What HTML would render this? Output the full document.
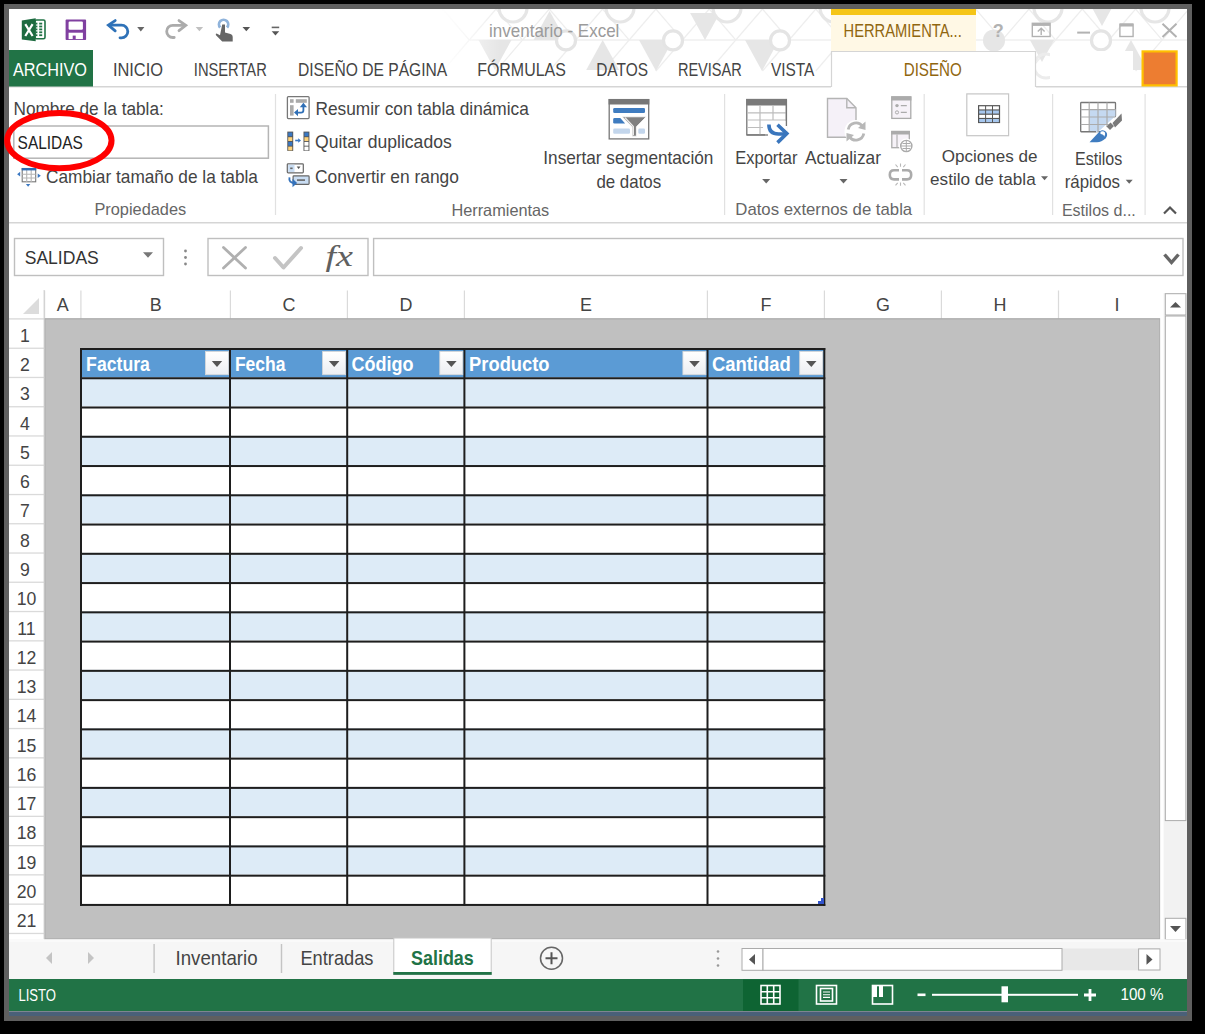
<!DOCTYPE html>
<html><head><meta charset="utf-8"><style>
html,body{margin:0;padding:0;background:#000;overflow:hidden}
svg{display:block}
text{font-family:"Liberation Sans",sans-serif;white-space:pre}
</style></head><body>
<svg width="1205" height="1034" viewBox="0 0 1205 1034">
<rect x="0" y="0" width="1205" height="1034" fill="#000"/>
<rect x="4" y="4" width="1188" height="1017" fill="#5f5f5f"/>
<rect x="9" y="9" width="1178" height="1002" fill="#fff"/>
<g clip-path="url(#titleclip)">
<rect x="470" y="39.3" width="717" height="1.4" fill="#eeeeee"/>
<path d="M389.4,9 L416.0,40 L389.4,71 M416.0,40 L442.7,9" fill="none" stroke="#eeeeee" stroke-width="1.2"/>
<path d="M442.7,9 L469.3,40 L442.7,71 M469.3,40 L496.0,9" fill="none" stroke="#eeeeee" stroke-width="1.2"/>
<path d="M496.0,9 L522.6,40 L496.0,71 M522.6,40 L549.3,9" fill="none" stroke="#eeeeee" stroke-width="1.2"/>
<path d="M549.3,9 L575.9,40 L549.3,71 M575.9,40 L602.6,9" fill="none" stroke="#eeeeee" stroke-width="1.2"/>
<path d="M602.6,9 L629.2,40 L602.6,71 M629.2,40 L655.9,9" fill="none" stroke="#eeeeee" stroke-width="1.2"/>
<path d="M655.9,9 L682.5,40 L655.9,71 M682.5,40 L709.2,9" fill="none" stroke="#eeeeee" stroke-width="1.2"/>
<path d="M709.2,9 L735.8,40 L709.2,71 M735.8,40 L762.5,9" fill="none" stroke="#eeeeee" stroke-width="1.2"/>
<path d="M762.5,9 L789.1,40 L762.5,71 M789.1,40 L815.8,9" fill="none" stroke="#eeeeee" stroke-width="1.2"/>
<path d="M815.8,9 L842.4,40 L815.8,71 M842.4,40 L869.1,9" fill="none" stroke="#eeeeee" stroke-width="1.2"/>
<path d="M869.1,9 L895.7,40 L869.1,71 M895.7,40 L922.4,9" fill="none" stroke="#eeeeee" stroke-width="1.2"/>
<path d="M922.4,9 L949.0,40 L922.4,71 M949.0,40 L975.7,9" fill="none" stroke="#eeeeee" stroke-width="1.2"/>
<path d="M975.7,9 L1002.3,40 L975.7,71 M1002.3,40 L1029.0,9" fill="none" stroke="#eeeeee" stroke-width="1.2"/>
<path d="M1029.0,9 L1055.6,40 L1029.0,71 M1055.6,40 L1082.3,9" fill="none" stroke="#eeeeee" stroke-width="1.2"/>
<path d="M1082.3,9 L1108.9,40 L1082.3,71 M1108.9,40 L1135.6,9" fill="none" stroke="#eeeeee" stroke-width="1.2"/>
<path d="M1135.6,9 L1162.2,40 L1135.6,71 M1162.2,40 L1188.9,9" fill="none" stroke="#eeeeee" stroke-width="1.2"/>
<path d="M1188.9,9 L1215.5,40 L1188.9,71 M1215.5,40 L1242.2,9" fill="none" stroke="#eeeeee" stroke-width="1.2"/>
<path d="M1242.2,9 L1268.8,40 L1242.2,71 M1268.8,40 L1295.5,9" fill="none" stroke="#eeeeee" stroke-width="1.2"/>
<path d="M1295.5,9 L1322.1,40 L1295.5,71 M1322.1,40 L1348.8,9" fill="none" stroke="#eeeeee" stroke-width="1.2"/>
<path d="M1348.8,9 L1375.4,40 L1348.8,71 M1375.4,40 L1402.1,9" fill="none" stroke="#eeeeee" stroke-width="1.2"/>
<path d="M1402.1,9 L1428.7,40 L1402.1,71 M1428.7,40 L1455.4,9" fill="none" stroke="#eeeeee" stroke-width="1.2"/>
<path d="M1455.4,9 L1482.0,40 L1455.4,71 M1482.0,40 L1508.7,9" fill="none" stroke="#eeeeee" stroke-width="1.2"/>
<path d="M1508.7,9 L1535.3,40 L1508.7,71 M1535.3,40 L1562.0,9" fill="none" stroke="#eeeeee" stroke-width="1.2"/>
<path d="M1562.0,9 L1588.6,40 L1562.0,71 M1588.6,40 L1615.3,9" fill="none" stroke="#eeeeee" stroke-width="1.2"/>
<path d="M1615.3,9 L1641.9,40 L1615.3,71 M1641.9,40 L1668.6,9" fill="none" stroke="#eeeeee" stroke-width="1.2"/>
<path d="M1668.6,9 L1695.2,40 L1668.6,71 M1695.2,40 L1721.9,9" fill="none" stroke="#eeeeee" stroke-width="1.2"/>
<path d="M1721.9,9 L1748.5,40 L1721.9,71 M1748.5,40 L1775.2,9" fill="none" stroke="#eeeeee" stroke-width="1.2"/>
<path d="M1775.2,9 L1801.8,40 L1775.2,71 M1801.8,40 L1828.5,9" fill="none" stroke="#eeeeee" stroke-width="1.2"/>
<path d="M1828.5,9 L1855.1,40 L1828.5,71 M1855.1,40 L1881.8,9" fill="none" stroke="#eeeeee" stroke-width="1.2"/>
<path d="M1881.8,9 L1908.4,40 L1881.8,71 M1908.4,40 L1935.1,9" fill="none" stroke="#eeeeee" stroke-width="1.2"/>
<path d="M1935.1,9 L1961.7,40 L1935.1,71 M1961.7,40 L1988.4,9" fill="none" stroke="#eeeeee" stroke-width="1.2"/>
<path d="M1988.4,9 L2015.0,40 L1988.4,71 M2015.0,40 L2041.7,9" fill="none" stroke="#eeeeee" stroke-width="1.2"/>
<path d="M2041.7,9 L2068.3,40 L2041.7,71 M2068.3,40 L2095.0,9" fill="none" stroke="#eeeeee" stroke-width="1.2"/>
<polygon points="549.6,11 565.6,40 533.6,40" fill="#e6e6e6"/>
<polygon points="602.7,40 619.2,70 586.2,70" fill="#e6e6e6"/>
<polygon points="690.1,13 719.9,13 705,40" fill="#e6e6e6"/>
<polygon points="639.0,40 673.0,40 656,71" fill="#e6e6e6"/>
<polygon points="745.0,40 779.0,40 762,71" fill="#e6e6e6"/>
<polygon points="1092.7,9 1111.3,9 1102,26" fill="#e6e6e6"/>
<polygon points="1029.9,40 1054.1,40 1042,62" fill="#e6e6e6"/>
<polygon points="1131,40 1147.5,70 1114.5,70" fill="#e6e6e6"/>
<polygon points="905.1,13 934.9,13 920,40" fill="#e6e6e6"/>
<polygon points="868,40 884.5,70 851.5,70" fill="#e6e6e6"/>
<polygon points="478.5,40 511.5,40 495,70" fill="#e6e6e6"/>
<circle cx="566" cy="40.4" r="9.5" fill="#fff" stroke="#e4e4e4" stroke-width="3.2"/>
<circle cx="673" cy="40.4" r="9.5" fill="#fff" stroke="#e4e4e4" stroke-width="3.2"/>
<circle cx="780" cy="40.4" r="9.5" fill="#fff" stroke="#e4e4e4" stroke-width="3.2"/>
<circle cx="887" cy="40.4" r="9.5" fill="#fff" stroke="#e4e4e4" stroke-width="3.2"/>
<circle cx="994" cy="40.4" r="11" fill="#e6e6e6"/>
<circle cx="1101" cy="40.4" r="9.5" fill="#fff" stroke="#e4e4e4" stroke-width="3.2"/>
<circle cx="513" cy="8" r="14" fill="#fff" stroke="#e6e6e6" stroke-width="3.2"/>
<circle cx="620" cy="8" r="14" fill="#fff" stroke="#e6e6e6" stroke-width="3.2"/>
<circle cx="727" cy="8" r="14" fill="#fff" stroke="#e6e6e6" stroke-width="3.2"/>
<circle cx="834" cy="8" r="14" fill="#fff" stroke="#e6e6e6" stroke-width="3.2"/>
<circle cx="941" cy="8" r="14" fill="#fff" stroke="#e6e6e6" stroke-width="3.2"/>
<circle cx="1048" cy="8" r="14" fill="#fff" stroke="#e6e6e6" stroke-width="3.2"/>
<circle cx="1155" cy="8" r="14" fill="#fff" stroke="#e6e6e6" stroke-width="3.2"/>
<circle cx="1046" cy="66" r="12" fill="none" stroke="#ececec" stroke-width="3"/>
<rect x="440" y="9" width="60" height="77" fill="url(#fadeg)"/>
</g>
<rect x="831" y="9" width="145" height="6" fill="#f5c518"/>
<rect x="831" y="15" width="145" height="36" fill="#fff8e5"/>
<text x="843.50" y="37.30" font-size="18.02" fill="#90660f" textLength="118.29" lengthAdjust="spacingAndGlyphs">HERRAMIENTA...</text>
<text x="489.10" y="37.20" font-size="17.73" fill="#9b9b9b" textLength="130.30" lengthAdjust="spacingAndGlyphs">inventario - Excel</text>
<rect x="9" y="86" width="822" height="1.5" fill="#d5d5d5"/>
<rect x="1036" y="86" width="151" height="1.5" fill="#d5d5d5"/>
<rect x="831" y="51" width="205" height="36" fill="#fff"/>
<path d="M831.5,87 V51.5 H1035.5 V87" fill="none" stroke="#d5d5d5" stroke-width="1.2"/>
<rect x="1050" y="51" width="83" height="35" fill="#fff"/>
<rect x="1141.5" y="50.3" width="36.2" height="36.2" fill="#ffc000"/>
<rect x="1143.7" y="52.5" width="31.8" height="31.8" fill="#ed7d31"/>
<rect x="9" y="50" width="84" height="36.5" fill="#217346"/>
<text x="13.00" y="75.50" font-size="19.19" fill="#fff" textLength="74.00" lengthAdjust="spacingAndGlyphs">ARCHIVO</text>
<text x="112.90" y="75.50" font-size="19.19" fill="#444" textLength="50.09" lengthAdjust="spacingAndGlyphs">INICIO</text>
<text x="193.80" y="75.50" font-size="19.19" fill="#444" textLength="73.00" lengthAdjust="spacingAndGlyphs">INSERTAR</text>
<text x="298.00" y="75.50" font-size="19.19" fill="#444" textLength="149.29" lengthAdjust="spacingAndGlyphs">DISEÑO DE PÁGINA</text>
<text x="477.20" y="75.50" font-size="19.19" fill="#444" textLength="88.60" lengthAdjust="spacingAndGlyphs">FÓRMULAS</text>
<text x="596.20" y="75.50" font-size="19.19" fill="#444" textLength="51.79" lengthAdjust="spacingAndGlyphs">DATOS</text>
<text x="677.90" y="75.50" font-size="19.19" fill="#444" textLength="63.90" lengthAdjust="spacingAndGlyphs">REVISAR</text>
<text x="770.90" y="75.50" font-size="19.19" fill="#444" textLength="43.51" lengthAdjust="spacingAndGlyphs">VISTA</text>
<text x="903.70" y="75.50" font-size="19.19" fill="#90660f" textLength="58.10" lengthAdjust="spacingAndGlyphs">DISEÑO</text>
<rect x="9" y="222" width="1178" height="1.5" fill="#d5d5d5"/>
<rect x="274.9" y="94" width="1.2" height="121" fill="#e1e1e1"/>
<rect x="724.0" y="94" width="1.2" height="121" fill="#e1e1e1"/>
<rect x="923.6" y="94" width="1.2" height="121" fill="#e1e1e1"/>
<rect x="1052.0" y="94" width="1.2" height="121" fill="#e1e1e1"/>
<rect x="1144.5" y="94" width="1.2" height="121" fill="#e1e1e1"/>
<text x="13.50" y="114.80" font-size="17.88" fill="#444" textLength="150.30" lengthAdjust="spacingAndGlyphs">Nombre de la tabla:</text>
<rect x="13.8" y="126" width="254.6" height="32.2" fill="#fff" stroke="#b5b5b5" stroke-width="1.5"/>
<text x="17.60" y="148.60" font-size="18.60" fill="#222" textLength="65.30" lengthAdjust="spacingAndGlyphs">SALIDAS</text>
<text x="46.00" y="182.50" font-size="18.31" fill="#444" textLength="211.98" lengthAdjust="spacingAndGlyphs">Cambiar tamaño de la tabla</text>
<text x="94.40" y="215.20" font-size="15.70" fill="#666" textLength="91.80" lengthAdjust="spacingAndGlyphs">Propiedades</text>
<text x="315.50" y="115.00" font-size="18.17" fill="#444" textLength="213.38" lengthAdjust="spacingAndGlyphs">Resumir con tabla dinámica</text>
<text x="315.00" y="148.20" font-size="18.02" fill="#444" textLength="136.70" lengthAdjust="spacingAndGlyphs">Quitar duplicados</text>
<text x="315.00" y="182.50" font-size="18.31" fill="#444" textLength="143.90" lengthAdjust="spacingAndGlyphs">Convertir en rango</text>
<text x="451.40" y="215.60" font-size="16.28" fill="#666" textLength="97.90" lengthAdjust="spacingAndGlyphs">Herramientas</text>
<text x="543.30" y="164.20" font-size="17.73" fill="#444" textLength="170.10" lengthAdjust="spacingAndGlyphs">Insertar segmentación</text>
<text x="596.40" y="187.90" font-size="17.73" fill="#444" textLength="64.81" lengthAdjust="spacingAndGlyphs">de datos</text>
<text x="735.30" y="164.20" font-size="17.73" fill="#444" textLength="62.21" lengthAdjust="spacingAndGlyphs">Exportar</text>
<text x="805.00" y="164.20" font-size="17.73" fill="#444" textLength="75.99" lengthAdjust="spacingAndGlyphs">Actualizar</text>
<text x="735.30" y="215.30" font-size="15.70" fill="#666" textLength="176.88" lengthAdjust="spacingAndGlyphs">Datos externos de tabla</text>
<text x="941.70" y="161.90" font-size="16.86" fill="#444" textLength="95.80" lengthAdjust="spacingAndGlyphs">Opciones de</text>
<text x="930.10" y="184.90" font-size="16.86" fill="#444" textLength="105.58" lengthAdjust="spacingAndGlyphs">estilo de tabla</text>
<text x="1075.00" y="165.00" font-size="17.44" fill="#444" textLength="47.21" lengthAdjust="spacingAndGlyphs">Estilos</text>
<text x="1064.70" y="188.10" font-size="17.44" fill="#444" textLength="55.30" lengthAdjust="spacingAndGlyphs">rápidos</text>
<text x="1061.90" y="216.10" font-size="15.99" fill="#666" textLength="73.90" lengthAdjust="spacingAndGlyphs">Estilos d...</text>
<polygon points="762.2,179.1 770.2,179.1 766.2,183.6" fill="#666"/>
<polygon points="839.5,179.1 847.5,179.1 843.5,183.6" fill="#666"/>
<polygon points="1041.0,176.3 1048.0,176.3 1044.5,180.3" fill="#666"/>
<polygon points="1125.7,179.8 1132.7,179.8 1129.2,183.8" fill="#666"/>
<path d="M1164,213.5 L1170,207.5 L1176,213.5" fill="none" stroke="#555" stroke-width="2.2"/>
<rect x="14.5" y="238.5" width="149" height="37" fill="#fff" stroke="#bfbfbf" stroke-width="1.4"/>
<text x="24.70" y="264.30" font-size="18.90" fill="#333" textLength="74.10" lengthAdjust="spacingAndGlyphs">SALIDAS</text>
<polygon points="143.0,252.2 153.0,252.2 148.0,257.8" fill="#777"/>
<circle cx="185.5" cy="251" r="1.4" fill="#888"/>
<circle cx="185.5" cy="257.5" r="1.4" fill="#888"/>
<circle cx="185.5" cy="264" r="1.4" fill="#888"/>
<rect x="208" y="238.5" width="160" height="37" fill="#fff" stroke="#bfbfbf" stroke-width="1.4"/>
<rect x="373.6" y="238.5" width="809.4" height="37" fill="#fff" stroke="#bfbfbf" stroke-width="1.4"/>
<rect x="9" y="290" width="1178" height="29" fill="#fff"/>
<polygon points="39,298 39,314 23,314" fill="#dcdcdc"/>
<rect x="9" y="318.3" width="36" height="1.2" fill="#d4d4d4"/>
<rect x="44.0" y="290.5" width="1.2" height="28.5" fill="#dadada"/>
<rect x="80.3" y="290.5" width="1.2" height="28.5" fill="#dadada"/>
<rect x="229.8" y="290.5" width="1.2" height="28.5" fill="#dadada"/>
<rect x="346.8" y="290.5" width="1.2" height="28.5" fill="#dadada"/>
<rect x="463.8" y="290.5" width="1.2" height="28.5" fill="#dadada"/>
<rect x="706.8" y="290.5" width="1.2" height="28.5" fill="#dadada"/>
<rect x="823.8" y="290.5" width="1.2" height="28.5" fill="#dadada"/>
<rect x="940.8" y="290.5" width="1.2" height="28.5" fill="#dadada"/>
<rect x="1057.9" y="290.5" width="1.2" height="28.5" fill="#dadada"/>
<text x="56.76" y="311.20" font-size="18.90" fill="#444" textLength="11.97" lengthAdjust="spacingAndGlyphs">A</text>
<text x="149.66" y="311.20" font-size="18.90" fill="#444" textLength="11.97" lengthAdjust="spacingAndGlyphs">B</text>
<text x="282.42" y="311.20" font-size="18.90" fill="#444" textLength="12.96" lengthAdjust="spacingAndGlyphs">C</text>
<text x="399.42" y="311.20" font-size="18.90" fill="#444" textLength="12.96" lengthAdjust="spacingAndGlyphs">D</text>
<text x="579.91" y="311.20" font-size="18.90" fill="#444" textLength="11.97" lengthAdjust="spacingAndGlyphs">E</text>
<text x="760.42" y="311.20" font-size="18.90" fill="#444" textLength="10.97" lengthAdjust="spacingAndGlyphs">F</text>
<text x="875.92" y="311.20" font-size="18.90" fill="#444" textLength="13.96" lengthAdjust="spacingAndGlyphs">G</text>
<text x="993.47" y="311.20" font-size="18.90" fill="#444" textLength="12.96" lengthAdjust="spacingAndGlyphs">H</text>
<text x="1114.50" y="311.20" font-size="18.90" fill="#444" textLength="4.99" lengthAdjust="spacingAndGlyphs">I</text>
<rect x="44.8" y="318.8" width="1115" height="620.2" fill="#c0c0c0" stroke="#adadad" stroke-width="1.3"/>
<rect x="9" y="347.6" width="35.2" height="1.3" fill="#dadada"/>
<text x="19.99" y="341.90" font-size="18.60" fill="#444" textLength="9.83" lengthAdjust="spacingAndGlyphs">1</text>
<rect x="9" y="376.8" width="35.2" height="1.3" fill="#dadada"/>
<text x="19.99" y="371.16" font-size="18.60" fill="#444" textLength="9.83" lengthAdjust="spacingAndGlyphs">2</text>
<rect x="9" y="406.1" width="35.2" height="1.3" fill="#dadada"/>
<text x="19.99" y="400.42" font-size="18.60" fill="#444" textLength="9.83" lengthAdjust="spacingAndGlyphs">3</text>
<rect x="9" y="435.3" width="35.2" height="1.3" fill="#dadada"/>
<text x="19.99" y="429.68" font-size="18.60" fill="#444" textLength="9.83" lengthAdjust="spacingAndGlyphs">4</text>
<rect x="9" y="464.6" width="35.2" height="1.3" fill="#dadada"/>
<text x="19.99" y="458.94" font-size="18.60" fill="#444" textLength="9.83" lengthAdjust="spacingAndGlyphs">5</text>
<rect x="9" y="493.9" width="35.2" height="1.3" fill="#dadada"/>
<text x="19.99" y="488.20" font-size="18.60" fill="#444" textLength="9.83" lengthAdjust="spacingAndGlyphs">6</text>
<rect x="9" y="523.1" width="35.2" height="1.3" fill="#dadada"/>
<text x="19.99" y="517.46" font-size="18.60" fill="#444" textLength="9.83" lengthAdjust="spacingAndGlyphs">7</text>
<rect x="9" y="552.4" width="35.2" height="1.3" fill="#dadada"/>
<text x="19.99" y="546.72" font-size="18.60" fill="#444" textLength="9.83" lengthAdjust="spacingAndGlyphs">8</text>
<rect x="9" y="581.6" width="35.2" height="1.3" fill="#dadada"/>
<text x="19.99" y="575.98" font-size="18.60" fill="#444" textLength="9.83" lengthAdjust="spacingAndGlyphs">9</text>
<rect x="9" y="610.9" width="35.2" height="1.3" fill="#dadada"/>
<text x="16.67" y="605.24" font-size="18.60" fill="#444" textLength="19.66" lengthAdjust="spacingAndGlyphs">10</text>
<rect x="9" y="640.2" width="35.2" height="1.3" fill="#dadada"/>
<text x="17.33" y="634.50" font-size="18.60" fill="#444" textLength="18.35" lengthAdjust="spacingAndGlyphs">11</text>
<rect x="9" y="669.4" width="35.2" height="1.3" fill="#dadada"/>
<text x="16.67" y="663.76" font-size="18.60" fill="#444" textLength="19.66" lengthAdjust="spacingAndGlyphs">12</text>
<rect x="9" y="698.7" width="35.2" height="1.3" fill="#dadada"/>
<text x="16.67" y="693.02" font-size="18.60" fill="#444" textLength="19.66" lengthAdjust="spacingAndGlyphs">13</text>
<rect x="9" y="727.9" width="35.2" height="1.3" fill="#dadada"/>
<text x="16.67" y="722.28" font-size="18.60" fill="#444" textLength="19.66" lengthAdjust="spacingAndGlyphs">14</text>
<rect x="9" y="757.2" width="35.2" height="1.3" fill="#dadada"/>
<text x="16.67" y="751.54" font-size="18.60" fill="#444" textLength="19.66" lengthAdjust="spacingAndGlyphs">15</text>
<rect x="9" y="786.5" width="35.2" height="1.3" fill="#dadada"/>
<text x="16.67" y="780.80" font-size="18.60" fill="#444" textLength="19.66" lengthAdjust="spacingAndGlyphs">16</text>
<rect x="9" y="815.7" width="35.2" height="1.3" fill="#dadada"/>
<text x="16.67" y="810.06" font-size="18.60" fill="#444" textLength="19.66" lengthAdjust="spacingAndGlyphs">17</text>
<rect x="9" y="845.0" width="35.2" height="1.3" fill="#dadada"/>
<text x="16.67" y="839.32" font-size="18.60" fill="#444" textLength="19.66" lengthAdjust="spacingAndGlyphs">18</text>
<rect x="9" y="874.2" width="35.2" height="1.3" fill="#dadada"/>
<text x="16.67" y="868.58" font-size="18.60" fill="#444" textLength="19.66" lengthAdjust="spacingAndGlyphs">19</text>
<rect x="9" y="903.5" width="35.2" height="1.3" fill="#dadada"/>
<text x="16.67" y="897.84" font-size="18.60" fill="#444" textLength="19.66" lengthAdjust="spacingAndGlyphs">20</text>
<rect x="9" y="932.8" width="35.2" height="1.3" fill="#dadada"/>
<text x="16.67" y="927.10" font-size="18.60" fill="#444" textLength="19.66" lengthAdjust="spacingAndGlyphs">21</text>
<rect x="43.6" y="290" width="1" height="649" fill="#d0d0d0"/>
<rect x="81" y="377.26" width="743.30" height="29.26" fill="#ddebf7"/>
<rect x="81" y="406.52" width="743.30" height="29.26" fill="#ffffff"/>
<rect x="81" y="435.78" width="743.30" height="29.26" fill="#ddebf7"/>
<rect x="81" y="465.04" width="743.30" height="29.26" fill="#ffffff"/>
<rect x="81" y="494.30" width="743.30" height="29.26" fill="#ddebf7"/>
<rect x="81" y="523.56" width="743.30" height="29.26" fill="#ffffff"/>
<rect x="81" y="552.82" width="743.30" height="29.26" fill="#ddebf7"/>
<rect x="81" y="582.08" width="743.30" height="29.26" fill="#ffffff"/>
<rect x="81" y="611.34" width="743.30" height="29.26" fill="#ddebf7"/>
<rect x="81" y="640.60" width="743.30" height="29.26" fill="#ffffff"/>
<rect x="81" y="669.86" width="743.30" height="29.26" fill="#ddebf7"/>
<rect x="81" y="699.12" width="743.30" height="29.26" fill="#ffffff"/>
<rect x="81" y="728.38" width="743.30" height="29.26" fill="#ddebf7"/>
<rect x="81" y="757.64" width="743.30" height="29.26" fill="#ffffff"/>
<rect x="81" y="786.90" width="743.30" height="29.26" fill="#ddebf7"/>
<rect x="81" y="816.16" width="743.30" height="29.26" fill="#ffffff"/>
<rect x="81" y="845.42" width="743.30" height="29.26" fill="#ddebf7"/>
<rect x="81" y="874.68" width="743.30" height="29.26" fill="#ffffff"/>
<rect x="81" y="348" width="743.30" height="29.26" fill="#5b9bd5"/>
<rect x="80.00" y="348.00" width="745.30" height="2" fill="#1e1e1e"/>
<rect x="80.00" y="377.26" width="745.30" height="2" fill="#1e1e1e"/>
<rect x="80.00" y="406.52" width="745.30" height="2" fill="#1e1e1e"/>
<rect x="80.00" y="435.78" width="745.30" height="2" fill="#1e1e1e"/>
<rect x="80.00" y="465.04" width="745.30" height="2" fill="#1e1e1e"/>
<rect x="80.00" y="494.30" width="745.30" height="2" fill="#1e1e1e"/>
<rect x="80.00" y="523.56" width="745.30" height="2" fill="#1e1e1e"/>
<rect x="80.00" y="552.82" width="745.30" height="2" fill="#1e1e1e"/>
<rect x="80.00" y="582.08" width="745.30" height="2" fill="#1e1e1e"/>
<rect x="80.00" y="611.34" width="745.30" height="2" fill="#1e1e1e"/>
<rect x="80.00" y="640.60" width="745.30" height="2" fill="#1e1e1e"/>
<rect x="80.00" y="669.86" width="745.30" height="2" fill="#1e1e1e"/>
<rect x="80.00" y="699.12" width="745.30" height="2" fill="#1e1e1e"/>
<rect x="80.00" y="728.38" width="745.30" height="2" fill="#1e1e1e"/>
<rect x="80.00" y="757.64" width="745.30" height="2" fill="#1e1e1e"/>
<rect x="80.00" y="786.90" width="745.30" height="2" fill="#1e1e1e"/>
<rect x="80.00" y="816.16" width="745.30" height="2" fill="#1e1e1e"/>
<rect x="80.00" y="845.42" width="745.30" height="2" fill="#1e1e1e"/>
<rect x="80.00" y="874.68" width="745.30" height="2" fill="#1e1e1e"/>
<rect x="80.00" y="903.94" width="745.30" height="2" fill="#1e1e1e"/>
<rect x="80.00" y="348" width="2" height="557.94" fill="#1e1e1e"/>
<rect x="229.00" y="348" width="2" height="557.94" fill="#1e1e1e"/>
<rect x="346.20" y="348" width="2" height="557.94" fill="#1e1e1e"/>
<rect x="463.40" y="348" width="2" height="557.94" fill="#1e1e1e"/>
<rect x="706.50" y="348" width="2" height="557.94" fill="#1e1e1e"/>
<rect x="823.30" y="348" width="2" height="557.94" fill="#1e1e1e"/>
<text x="86.10" y="371.20" font-size="19.48" fill="#fff" font-weight="bold" textLength="63.78" lengthAdjust="spacingAndGlyphs">Factura</text>
<text x="234.90" y="371.20" font-size="19.48" fill="#fff" font-weight="bold" textLength="50.68" lengthAdjust="spacingAndGlyphs">Fecha</text>
<text x="351.40" y="371.20" font-size="19.48" fill="#fff" font-weight="bold" textLength="62.11" lengthAdjust="spacingAndGlyphs">Código</text>
<text x="469.10" y="371.20" font-size="19.48" fill="#fff" font-weight="bold" textLength="80.39" lengthAdjust="spacingAndGlyphs">Producto</text>
<text x="711.90" y="371.20" font-size="19.48" fill="#fff" font-weight="bold" textLength="78.90" lengthAdjust="spacingAndGlyphs">Cantidad</text>
<defs><linearGradient id="btng" x1="0" y1="0" x2="0" y2="1"><stop offset="0" stop-color="#ffffff"/><stop offset="1" stop-color="#eceef2"/></linearGradient><linearGradient id="fadeg" x1="0" x2="1"><stop offset="0" stop-color="#fff"/><stop offset="1" stop-color="#fff" stop-opacity="0"/></linearGradient><clipPath id="titleclip"><rect x="440" y="9" width="747" height="77"/></clipPath></defs>
<rect x="205.4" y="351.5" width="23" height="23.2" fill="url(#btng)" stroke="#d8d8d8" stroke-width="0.8"/>
<polygon points="211.8,360.9 222.2,360.9 217.0,367.1" fill="#555"/>
<rect x="322.6" y="351.5" width="23" height="23.2" fill="url(#btng)" stroke="#d8d8d8" stroke-width="0.8"/>
<polygon points="328.9,360.9 339.4,360.9 334.2,367.1" fill="#555"/>
<rect x="439.8" y="351.5" width="23" height="23.2" fill="url(#btng)" stroke="#d8d8d8" stroke-width="0.8"/>
<polygon points="446.1,360.9 456.6,360.9 451.4,367.1" fill="#555"/>
<rect x="682.9" y="351.5" width="23" height="23.2" fill="url(#btng)" stroke="#d8d8d8" stroke-width="0.8"/>
<polygon points="689.2,360.9 699.8,360.9 694.5,367.1" fill="#555"/>
<rect x="799.7" y="351.5" width="23" height="23.2" fill="url(#btng)" stroke="#d8d8d8" stroke-width="0.8"/>
<polygon points="806.0,360.9 816.5,360.9 811.3,367.1" fill="#555"/>
<path d="M818,904 h6 v-6 h-3 v3 h-3 z" fill="#3355cc"/>
<rect x="1160.3" y="290" width="26.7" height="652" fill="#fff"/><rect x="1163.6" y="293" width="23.4" height="649" fill="#f2f2f2"/>
<rect x="1165.3" y="293.7" width="20.6" height="21.3" fill="#fff" stroke="#ababab" stroke-width="1"/>
<polygon points="1170,307.5 1181,307.5 1175.5,302" fill="#555"/>
<rect x="1165.3" y="316" width="20.6" height="504.6" fill="#fff" stroke="#ababab" stroke-width="1"/>
<rect x="1165.3" y="918.3" width="20.6" height="21.3" fill="#fff" stroke="#ababab" stroke-width="1"/>
<polygon points="1170,926 1181,926 1175.5,932" fill="#555"/>
<rect x="9" y="939.5" width="1178" height="39.5" fill="#f6f6f6"/><rect x="9" y="939.5" width="1178" height="2.5" fill="#fafafa"/>
<polygon points="52,952 52,964 46,958" fill="#c4c4c4"/>
<polygon points="88,952 88,964 94,958" fill="#c4c4c4"/>
<rect x="153.4" y="944" width="1.4" height="29" fill="#c4c4c4"/>
<rect x="280.8" y="944" width="1.4" height="29" fill="#c4c4c4"/>
<text x="175.50" y="964.50" font-size="19.62" fill="#444" textLength="82.09" lengthAdjust="spacingAndGlyphs">Inventario</text>
<text x="300.40" y="964.50" font-size="19.62" fill="#444" textLength="73.11" lengthAdjust="spacingAndGlyphs">Entradas</text>
<rect x="393.8" y="938" width="97.4" height="36.5" fill="#fff" stroke="#c6c6c6" stroke-width="1"/>
<rect x="393.3" y="972" width="98.4" height="2.8" fill="#217346"/>
<text x="411.00" y="964.50" font-size="19.62" fill="#217346" font-weight="bold" textLength="62.80" lengthAdjust="spacingAndGlyphs">Salidas</text>
<circle cx="551.5" cy="958.2" r="11" fill="none" stroke="#666" stroke-width="1.5"/>
<path d="M545.5,958.2 h12 M551.5,952.2 v12" stroke="#555" stroke-width="2"/>
<circle cx="718" cy="951.5" r="1.3" fill="#999"/>
<circle cx="718" cy="958.5" r="1.3" fill="#999"/>
<circle cx="718" cy="965.5" r="1.3" fill="#999"/>
<rect x="742" y="948.5" width="418" height="21.8" fill="#e8e8e8"/>
<rect x="742" y="948.5" width="21" height="21.8" fill="#fff" stroke="#ababab" stroke-width="1"/>
<polygon points="749,959.4 755,954 755,964.8" fill="#555"/>
<rect x="763" y="948.5" width="299" height="21.8" fill="#fff" stroke="#ababab" stroke-width="1"/>
<rect x="1138.6" y="948.9" width="21.4" height="21.1" fill="#fff" stroke="#ababab" stroke-width="1"/>
<polygon points="1152.5,959.4 1146.5,954 1146.5,964.8" fill="#555"/>
<rect x="9" y="979" width="1178" height="32" fill="#217346"/>
<rect x="743" y="979.5" width="55.5" height="31.5" fill="#0e6433"/>
<rect x="9" y="1011" width="1178" height="5" fill="#4a6078"/><rect x="9" y="1011" width="1178" height="1" fill="#7d8591"/>
<text x="18.40" y="1000.70" font-size="16.13" fill="#fff" textLength="37.69" lengthAdjust="spacingAndGlyphs">LISTO</text>
<text x="1120.50" y="999.80" font-size="16.86" fill="#fff" textLength="43.01" lengthAdjust="spacingAndGlyphs">100 %</text>
<g stroke="#fff" stroke-width="1.6" fill="none"><rect x="761" y="985.5" width="19" height="18.5"/><path d="M767.3,985.5 v18.5 M773.7,985.5 v18.5 M761,991.7 h19 M761,997.8 h19"/></g>
<g stroke="#fff" stroke-width="1.6" fill="none"><rect x="816.5" y="985.5" width="20" height="18.5"/><rect x="820.5" y="988.5" width="12" height="12.5"/><path d="M823,992 h7 M823,994.7 h7 M823,997.4 h7" stroke-width="1.1"/></g>
<g stroke="#fff" stroke-width="1.6" fill="none"><rect x="872.5" y="985.5" width="20" height="18.5"/></g><rect x="873" y="986" width="4" height="11" fill="#fff"/><rect x="879" y="986" width="4" height="11" fill="#fff"/>
<rect x="917.5" y="993.5" width="8" height="2.6" fill="#fff"/>
<rect x="932" y="993.8" width="146" height="2" fill="#fff"/>
<rect x="1001.5" y="986.3" width="6.5" height="16" fill="#fff"/>
<path d="M1084,995 h12 M1090,989 v12" stroke="#fff" stroke-width="2.8"/>
<rect x="35" y="20" width="10" height="18.7" rx="1.5" fill="#fff" stroke="#217346" stroke-width="1.6"/>
<rect x="39.2" y="22.700000000000003" width="3" height="1.8" fill="#217346"/>
<rect x="35.8" y="22.700000000000003" width="1.6" height="1.8" fill="#217346"/>
<rect x="39.2" y="25.6" width="3" height="1.8" fill="#217346"/>
<rect x="35.8" y="25.6" width="1.6" height="1.8" fill="#217346"/>
<rect x="39.2" y="28.5" width="3" height="1.8" fill="#217346"/>
<rect x="35.8" y="28.5" width="1.6" height="1.8" fill="#217346"/>
<rect x="39.2" y="31.4" width="3" height="1.8" fill="#217346"/>
<rect x="35.8" y="31.4" width="1.6" height="1.8" fill="#217346"/>
<rect x="39.2" y="34.300000000000004" width="3" height="1.8" fill="#217346"/>
<rect x="35.8" y="34.300000000000004" width="1.6" height="1.8" fill="#217346"/>
<polygon points="21.8,20.4 35.7,18.3 35.7,41.3 21.8,39.5" fill="#1d6b40"/>
<path d="M25.3,24.2 L32.6,36 M32.6,24.2 L25.3,36" stroke="#fff" stroke-width="2.2"/>
<rect x="65.6" y="19.6" width="20.5" height="20.5" rx="0.8" fill="#8040a0"/>
<rect x="68.6" y="21.6" width="14.3" height="8.2" rx="1.2" fill="#fff"/>
<rect x="68.6" y="32.7" width="14.3" height="6.4" fill="#fff"/>
<rect x="72.7" y="35.6" width="3" height="3.6" fill="#8040a0"/>
<path d="M110,25.2 H121.5 A6.3,6.3 0 0 1 121.5,37.8 H120" fill="none" stroke="#2f72b8" stroke-width="2.8" stroke-linecap="round"/>
<path d="M115.2,20.6 L108.4,25.2 L115.2,30.8" fill="none" stroke="#2f72b8" stroke-width="2.8" stroke-linejoin="miter" stroke-linecap="round"/>
<polygon points="137.2,27.1 144.4,27.1 140.8,31.5" fill="#666"/>
<path d="M185,25.3 H172.8 A6.1,6.1 0 0 0 172.8,37.5 H174.2" fill="none" stroke="#ababab" stroke-width="2.8" stroke-linecap="round"/>
<path d="M179,20.6 L185.8,25.3 L179,30.7" fill="none" stroke="#ababab" stroke-width="2.8" stroke-linecap="round"/>
<polygon points="195.7,27.1 203.1,27.1 199.4,31.3" fill="#c0c0c0"/>
<path d="M220.2,27.5 A4.6,4.6 0 1 1 227,27.5" fill="none" stroke="#8fb3db" stroke-width="2.8"/>
<path d="M222.2,24.5 h2.8 v8 l5.5,1.5 q2.2,0.6 2.2,2.8 v4.6 h-10.5 l-6.2,-6.2 q-0.8,-1.2 0.6,-1.6 l3.4,1.6 z" fill="#666"/>
<polygon points="242.5,27.1 250.1,27.1 246.3,31.3" fill="#555"/>
<rect x="271.7" y="26.6" width="7.5" height="1.6" fill="#666"/>
<polygon points="271.7,31.2 279.2,31.2 275.45,35.6" fill="#555"/>
<text x="992.8" y="37.2" font-size="18.5" font-weight="bold" fill="#b2b2b2" textLength="11" lengthAdjust="spacingAndGlyphs">?</text>
<rect x="1032.3" y="23.3" width="17.8" height="13.2" fill="none" stroke="#b2b2b2" stroke-width="1.4"/>
<rect x="1032.3" y="23.3" width="17.8" height="2.6" fill="#b2b2b2"/>
<path d="M1041.2,35 V28.5 M1037.8,31.5 L1041.2,28.2 L1044.6,31.5" fill="none" stroke="#b2b2b2" stroke-width="1.4"/>
<rect x="1077.2" y="31.6" width="12.8" height="2" fill="#b2b2b2"/>
<rect x="1119.9" y="24.2" width="13.2" height="12.3" fill="none" stroke="#b2b2b2" stroke-width="1.4"/>
<rect x="1119.9" y="23.5" width="13.2" height="3" fill="#b2b2b2"/>
<path d="M1162.5,23.8 L1176.5,37 M1176.5,23.8 L1162.5,37" stroke="#b2b2b2" stroke-width="2"/>
<ellipse cx="59.35" cy="140.55" rx="52.2" ry="27.6" fill="none" stroke="#ff0000" stroke-width="6"/>
<rect x="22.2" y="168.5" width="13.5" height="13.3" fill="#fff" stroke="#777" stroke-width="1.1"/>
<path d="M26.7,170 v12 M31.2,170 v12 M22.2,174.3 h13.5 M22.2,178 h13.5" stroke="#b5b5b5" stroke-width="1.1"/>
<rect x="21.7" y="168" width="14.5" height="2.4" fill="#2e6db4"/>
<polygon points="20.2,171.8 20.2,176.6 17.1,174.2" fill="#3b78c2"/>
<polygon points="37.7,173.4 37.7,177.9 40.8,175.65" fill="#3b78c2"/>
<polygon points="25.9,183.9 30.3,183.9 28.1,186.7" fill="#3b78c2"/>
<rect x="287.4" y="96.6" width="21.7" height="22" rx="1" fill="#fff" stroke="#777" stroke-width="1.3"/>
<rect x="290" y="99.2" width="3.6" height="3.6" fill="#aaa"/>
<rect x="295.8" y="99.2" width="11" height="3.6" fill="#aaa"/>
<rect x="290" y="105.2" width="3.6" height="10.4" fill="#aaa"/>
<path d="M297,112.6 H301 Q303.4,112.6 303.4,110.2 V106" fill="none" stroke="#2f6fb6" stroke-width="1.8"/>
<polygon points="299.8,107.2 303.4,102.8 307,107.2" fill="#2f6fb6"/>
<polygon points="298,108.9 294,112.6 298,116.2" fill="#2f6fb6"/>
<rect x="287.3" y="131.6" width="5.9" height="19.3" fill="#555"/>
<rect x="288.2" y="132.5" width="4.1" height="3.8" fill="#3a78c3"/>
<rect x="288.2" y="137.2" width="4.1" height="3.8" fill="#fdd27a"/>
<rect x="288.2" y="141.9" width="4.1" height="3.8" fill="#3a78c3"/>
<rect x="288.2" y="146.6" width="4.1" height="3.8" fill="#fdd27a"/>
<rect x="303.5" y="131.6" width="5.9" height="19.3" fill="#555"/>
<rect x="304.4" y="132.5" width="4.1" height="3.8" fill="#3a78c3"/>
<rect x="304.4" y="137.2" width="4.1" height="3.8" fill="#fdd27a"/>
<rect x="304.4" y="141.9" width="4.1" height="3.8" fill="#fff"/>
<rect x="304.4" y="146.6" width="4.1" height="3.8" fill="#fff"/>
<path d="M295.2,140.5 h3.5" stroke="#3a78c3" stroke-width="1.6"/>
<polygon points="298.2,138.2 301,140.5 298.2,142.8" fill="#3a78c3"/>
<rect x="287.3" y="163.8" width="16" height="9" rx="0.8" fill="#fff" stroke="#666" stroke-width="1.2"/>
<rect x="288.2" y="164.7" width="6.3" height="7.3" fill="#c9ddf3"/>
<rect x="290.2" y="167.5" width="2.4" height="1.6" fill="#666"/>
<polygon points="296.7,166.6 300.5,166.6 298.6,169" fill="#555"/>
<rect x="293.1" y="175.9" width="16" height="8.4" rx="0.8" fill="#c9ddf3" stroke="#666" stroke-width="1.2"/>
<rect x="297" y="179.3" width="8" height="1.6" fill="#666"/>
<path d="M289.5,177.4 Q288.3,183 295,183" fill="none" stroke="#3472bb" stroke-width="1.9"/>
<polygon points="292.5,178.8 297.2,183 292.5,187.2" fill="#3472bb"/>
<rect x="609.2" y="99.6" width="39.5" height="39.3" fill="#fff" stroke="#777" stroke-width="1.3"/>
<rect x="608.6" y="99" width="40.7" height="5.5" fill="#777"/>
<rect x="613.2" y="107.9" width="31.8" height="5.2" rx="1.3" fill="#3f7cc0"/>
<path d="M613.2,119.4 q0,-1.3 1.3,-1.3 h5.8 l4.8,5.5 h-10.6 q-1.3,0 -1.3,-1.3 z" fill="#3f7cc0"/>
<rect x="613.2" y="128.6" width="16.8" height="5.2" rx="1.3" fill="#c3d6ec"/>
<rect x="638.3" y="128.6" width="6.7" height="5.2" rx="1.3" fill="#c3d6ec"/>
<path d="M622.2,116.8 H646.2 L636.4,126.8 V136.2 H632.2 V126.8 Z" fill="#808080" stroke="#fff" stroke-width="0.8"/>
<path d="M625,117.6 L633.3,126.4 V135.2" fill="none" stroke="#f0f0f0" stroke-width="1.3"/>
<rect x="746.8" y="99.5" width="39.6" height="35.4" fill="#fff" stroke="#777" stroke-width="1.3"/>
<rect x="746.2" y="99" width="40.8" height="6.5" fill="#7a7a7a"/>
<path d="M760,105.5 v29.5 M773,105.5 v14.5 M747,112.8 h39.5 M747,120 h39.5 M747,127.5 h16" stroke="#bdbdbd" stroke-width="1.2"/>
<rect x="765" y="121" width="22" height="23" fill="#fff"/>
<path d="M786.4,99.5 V126" stroke="#777" stroke-width="1.3"/>
<path d="M746.8,135 H768" stroke="#777" stroke-width="1.3"/>
<path d="M768.9,124.5 Q768.9,134 778.5,134 H786" fill="none" stroke="#3a76bd" stroke-width="3.6"/>
<path d="M777.5,124.8 L786.8,133.6 L777.5,142.6" fill="none" stroke="#3a76bd" stroke-width="3.6" stroke-linejoin="miter"/>
<path d="M827.5,98.5 H846.8 L856,107.8 V137.2 H827.5 Z" fill="#f5f1f8" stroke="#b4b4b4" stroke-width="1.4"/>
<path d="M846.8,98.5 V107.8 H856" fill="none" stroke="#b4b4b4" stroke-width="1.4"/>
<circle cx="856" cy="131.5" r="11.5" fill="#fff"/>
<path d="M848.2,129.5 A8,8 0 0 1 862.5,126.2 M863.8,133.5 A8,8 0 0 1 849.5,136.8" fill="none" stroke="#b8b8b8" stroke-width="2.8"/>
<polygon points="865.5,121.5 865.5,130 858,128" fill="#b8b8b8"/>
<polygon points="846.5,141.5 846.5,133 854,135" fill="#b8b8b8"/>
<rect x="891.8" y="96.9" width="19" height="21.5" fill="#f6f2f8" stroke="#ababab" stroke-width="1.3"/>
<rect x="891.2" y="96.3" width="20.2" height="4.2" fill="#ababab"/>
<circle cx="897" cy="105.6" r="1.7" fill="#ababab"/><circle cx="897" cy="112.4" r="1.6" fill="none" stroke="#ababab" stroke-width="1"/>
<path d="M900.8,105.6 h6 M900.8,112.4 h6" stroke="#ababab" stroke-width="1.4"/>
<rect x="891.8" y="131.5" width="17.5" height="16.2" fill="#f6f2f8" stroke="#ababab" stroke-width="1.3"/>
<rect x="891.2" y="130.9" width="18.7" height="3.6" fill="#ababab"/>
<path d="M897,134.5 v13" stroke="#ababab" stroke-width="1.1"/>
<circle cx="906.3" cy="146" r="7.4" fill="#fff"/>
<circle cx="906.3" cy="146" r="5.6" fill="none" stroke="#ababab" stroke-width="1.4"/>
<path d="M900.7,146 h11.2 M906.3,140.4 v11.2 M902.5,143.5 h7.6 M902.5,148.5 h7.6" stroke="#ababab" stroke-width="1"/>
<path d="M899,170.2 h-5 q-4.2,0 -4.2,4.6 q0,4.6 4.2,4.6 h5 M902,170.2 h5 q4.2,0 4.2,4.6 q0,4.6 -4.2,4.6 h-5" fill="none" stroke="#ababab" stroke-width="2.6"/>
<path d="M900.5,163.5 v3.2 M895.5,164.5 l2.2,2.6 M905.5,164.5 l-2.2,2.6 M900.5,182.5 v3.2 M895.5,185.4 l2.2,-2.6 M905.5,185.4 l-2.2,-2.6" stroke="#b8b8b8" stroke-width="1.1"/>
<rect x="966.8" y="93.9" width="41.8" height="41.8" fill="#fff" stroke="#c6c6c6" stroke-width="1.2"/>
<rect x="978" y="105.1" width="22.1" height="18" fill="#555"/>
<rect x="979.2" y="106.3" width="5.9" height="3.1" fill="#fff"/>
<rect x="986.1" y="106.3" width="5.9" height="3.1" fill="#fff"/>
<rect x="993.0" y="106.3" width="5.9" height="3.1" fill="#fff"/>
<rect x="979.2" y="110.5" width="5.9" height="3.1" fill="#a7c7ee"/>
<rect x="986.1" y="110.5" width="5.9" height="3.1" fill="#a7c7ee"/>
<rect x="993.0" y="110.5" width="5.9" height="3.1" fill="#a7c7ee"/>
<rect x="979.2" y="114.8" width="5.9" height="3.1" fill="#fff"/>
<rect x="986.1" y="114.8" width="5.9" height="3.1" fill="#fff"/>
<rect x="993.0" y="114.8" width="5.9" height="3.1" fill="#fff"/>
<rect x="979.2" y="119.0" width="5.9" height="3.1" fill="#a7c7ee"/>
<rect x="986.1" y="119.0" width="5.9" height="3.1" fill="#a7c7ee"/>
<rect x="993.0" y="119.0" width="5.9" height="3.1" fill="#a7c7ee"/>
<rect x="1080.7" y="102.5" width="34.8" height="29.2" rx="0.8" fill="#fff" stroke="#777" stroke-width="1.3"/>
<polygon points="1089.2,109.6 1115.5,109.6 1115.5,116 1098,132 1089.2,132" fill="#c5d9f1"/>
<path d="M1089.2,102.5 v29.5 M1098,102.5 v29.5 M1107,102.5 v29.5 M1080.7,109.6 h34.8 M1080.7,117 h34.8 M1080.7,124.5 h34.8" stroke="#ababab" stroke-width="1.2"/>
<polygon points="1100,134 1122,110 1124,140 1096,140" fill="#fff"/>
<path d="M1080.7,131.7 H1096" stroke="#777" stroke-width="1.3"/>
<polygon points="1112.5,123 1121.5,113.5 1122,120.5 1115,127.5" fill="#7a7a7a"/>
<polygon points="1106.5,126.5 1110.5,122.5 1114,126 1110,130" fill="#7a7a7a"/>
<path d="M1089.5,142.2 L1099.5,131.5 Q1103,128.8 1106,131.8 Q1108.5,134.8 1105.5,138.5 Q1101.5,142.2 1097,142.2 Z" fill="#3f7cc0"/>
<path d="M1100.5,131.8 Q1103,130.3 1104.8,132.3 Q1106,134.3 1104.3,136.8 Q1103.5,134 1100.5,134 Z" fill="#fff"/>
<path d="M223.5,247.5 L245.5,268 M245.5,247.5 L223.5,268" stroke="#b0b0b0" stroke-width="2.8" stroke-linecap="round"/>
<path d="M275,258 L283.5,267.5 L301,248" fill="none" stroke="#c4c4c4" stroke-width="4" stroke-linejoin="round" stroke-linecap="round"/>
<text x="325.5" y="265.5" style="font-family:'Liberation Serif',serif;font-style:italic" font-size="29" fill="#606060" textLength="27.5" lengthAdjust="spacingAndGlyphs">fx</text>
<path d="M1164.5,254.5 L1171.5,262.5 L1178.5,254.5" fill="none" stroke="#666" stroke-width="3.4"/>
</svg></body></html>
